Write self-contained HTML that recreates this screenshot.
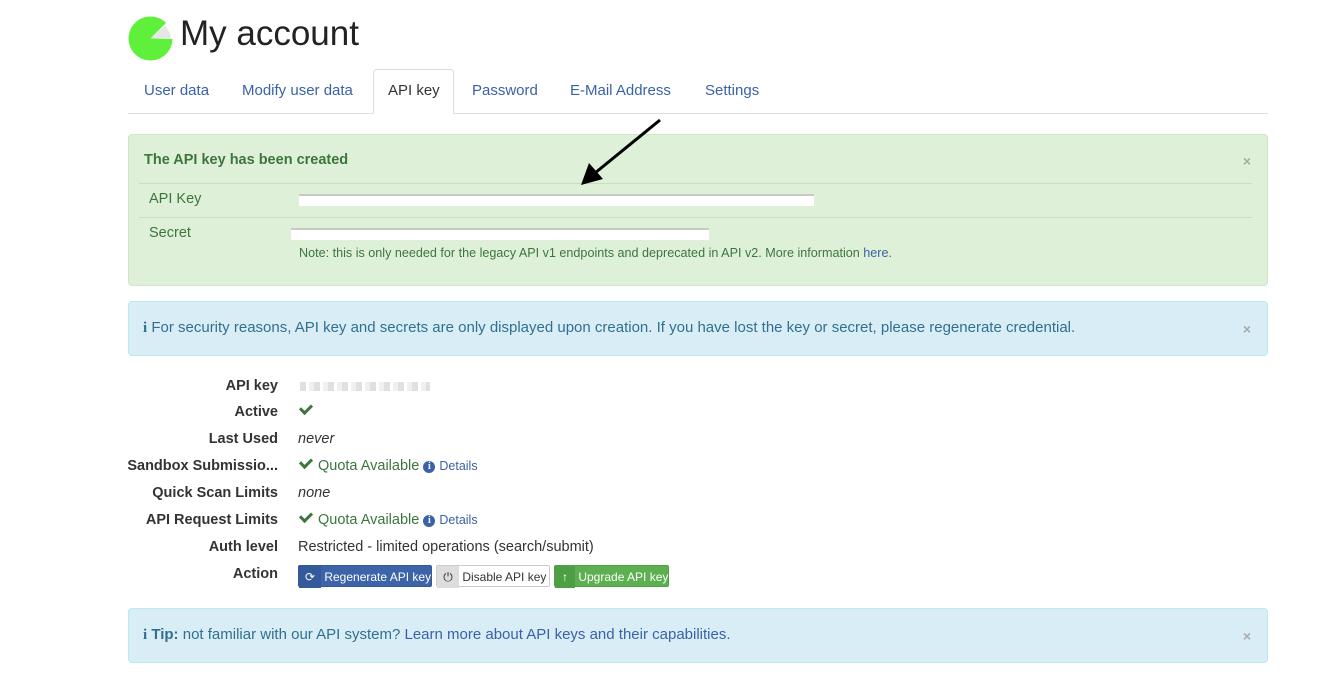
<!DOCTYPE html>
<html><head><style>
body{margin:0;background:#fff;font-family:"Liberation Sans",sans-serif;color:#333;width:1337px;height:693px;overflow:hidden;position:relative}
.abs{position:absolute}
a{color:#3a62a7;text-decoration:none}
.tabs{position:absolute;left:128px;top:69px;width:1140px;height:44px;border-bottom:1px solid #ddd}
.tab{position:absolute;top:13px;font-size:15px;color:#3a62a7;white-space:nowrap}
.tab.act{top:0;height:45px;border:1px solid #ddd;border-bottom:1px solid #fff;border-radius:4px 4px 0 0;background:#fff;color:#333;line-height:42px;padding:0 14px;box-sizing:border-box}
.alert-g{position:absolute;left:128px;top:134px;width:1140px;height:152px;box-sizing:border-box;background:#dff0d8;border:1px solid #d0e6c0;border-radius:4px;color:#3c763d}
.alert-b{position:absolute;left:128px;width:1140px;box-sizing:border-box;background:#d9edf7;border:1px solid #bce8f1;border-radius:4px;color:#31708f;font-size:15px}
.x{position:absolute;right:16px;color:#aaa;font-size:14px;font-weight:bold}
.lbl{position:absolute;right:1059px;font-size:14.5px;font-weight:bold;color:#333;text-align:right;white-space:nowrap}
.val{position:absolute;left:298px;font-size:14.5px;color:#333;white-space:nowrap}
.ok{color:#3c763d}
.chk{display:inline-block;width:9px;height:5px;border-left:3px solid #3c763d;border-bottom:3px solid #3c763d;transform:rotate(-45deg);margin:0 6px 4px 2px}
.info{display:inline-block;width:12px;height:12px;border-radius:50%;background:#3a62a7;color:#fff;font-size:10px;font-weight:bold;text-align:center;line-height:12px;font-family:"Liberation Serif",serif;vertical-align:1px}
.blur{position:absolute;height:9px;background:repeating-linear-gradient(90deg,#ddd 0 6px,#fff 6px 9px,#eee 9px 14px);opacity:.9}
.btn{position:absolute;top:565px;height:22px;font-size:12px;line-height:22px;border-radius:2px;box-sizing:border-box;white-space:nowrap}
</style></head><body>
<svg class="abs" style="left:128px;top:16px" width="45" height="45" viewBox="0 0 45 45"><circle cx="22.5" cy="22.5" r="22" fill="#5ef03a"/><path d="M22.5 22.5 L38 7 L45 7 L45 23 Z" fill="#fff"/><path d="M22.5 22.5 L37 10 A20 20 0 0 1 43 22.5 Z" fill="#e6e6e6"/></svg>
<div class="abs" style="left:180px;top:14px;font-size:35px;color:#222">My account</div>
<div class="tabs">
<span class="tab" style="left:16px">User data</span>
<span class="tab" style="left:114px">Modify user data</span>
<span class="tab act" style="left:245px;width:81px">API key</span>
<span class="tab" style="left:344px">Password</span>
<span class="tab" style="left:442px">E-Mail Address</span>
<span class="tab" style="left:577px">Settings</span>
</div>
<div class="alert-g">
<div class="abs" style="left:15px;top:17px;font-weight:bold;font-size:14.5px">The API key has been created</div>
<div class="x" style="top:18px">×</div>
<div class="abs" style="left:10px;right:15px;top:48px;border-top:1px solid #cbdcbf"></div>
<div class="abs" style="left:20px;top:56px;font-size:14.5px">API Key</div>
<div class="abs" style="left:10px;right:15px;top:82px;border-top:1px solid #cbdcbf"></div>
<div class="abs" style="left:20px;top:90px;font-size:14.5px">Secret</div>
<div class="abs" style="left:170px;top:59px;width:515px;height:10px;background:#fff;border-top:2px solid #c8c8c8"></div>
<div class="abs" style="left:162px;top:93px;width:418px;height:10px;background:#fff;border-top:2px solid #c8c8c8"></div>
<div class="abs" style="left:170px;top:111px;font-size:12.6px;white-space:nowrap">Note: this is only needed for the legacy API v1 endpoints and deprecated in API v2. More information <a>here</a>.</div>
</div>
<svg class="abs" style="left:575px;top:115px" width="90" height="75"><line x1="85" y1="5" x2="20" y2="58" stroke="#000" stroke-width="3"/><polygon points="6,70 14,48 28,64" fill="#000"/></svg>
<div class="alert-b" style="top:301px;height:55px"><div class="abs" style="left:14px;top:17px;white-space:nowrap"><b style="font-family:'Liberation Serif',serif">i</b> For security reasons, API key and secrets are only displayed upon creation. If you have lost the key or secret, please regenerate credential.</div><div class="x" style="top:19px">×</div></div>
<div class="lbl" style="top:378px">API key</div><div class="blur" style="left:300px;top:382px;width:130px"></div>
<div class="lbl" style="top:404px">Active</div><div class="val" style="top:404px"><span class="chk"></span></div>
<div class="lbl" style="top:431px">Last Used</div><div class="val" style="top:431px"><i>never</i></div>
<div class="lbl" style="top:458px">Sandbox Submissio...</div><div class="val ok" style="top:458px"><span class="chk"></span>Quota Available <span class="info">i</span> <a style="font-size:12.5px">Details</a></div>
<div class="lbl" style="top:485px">Quick Scan Limits</div><div class="val" style="top:485px"><i>none</i></div>
<div class="lbl" style="top:512px">API Request Limits</div><div class="val ok" style="top:512px"><span class="chk"></span>Quota Available <span class="info">i</span> <a style="font-size:12.5px">Details</a></div>
<div class="lbl" style="top:539px">Auth level</div><div class="val" style="top:539px">Restricted - limited operations (search/submit)</div>
<div class="lbl" style="top:566px">Action</div>
<div class="btn" style="left:298px;width:134px;background:#3d64a8;color:#fff;border:1px solid #345795"><span style="display:inline-block;width:22px;text-align:center;background:#355a9a">⟳</span> Regenerate API key</div>
<div class="btn" style="left:436px;width:114px;background:#fff;color:#333;border:1px solid #ccc"><span style="display:inline-block;width:22px;text-align:center;background:#ddd">⏻</span> Disable API key</div>
<div class="btn" style="left:554px;width:115px;background:#5cb04f;color:#fff;border:1px solid #4fa044"><span style="display:inline-block;width:20px;text-align:center;background:#4e9e43">↑</span> Upgrade API key</div>
<div class="alert-b" style="top:608px;height:55px"><div class="abs" style="left:14px;top:17px;white-space:nowrap"><b><span style="font-family:'Liberation Serif',serif">i</span> Tip:</b> not familiar with our API system? <a>Learn more about API keys and their capabilities.</a></div><div class="x" style="top:19px">×</div></div>
</body></html>
